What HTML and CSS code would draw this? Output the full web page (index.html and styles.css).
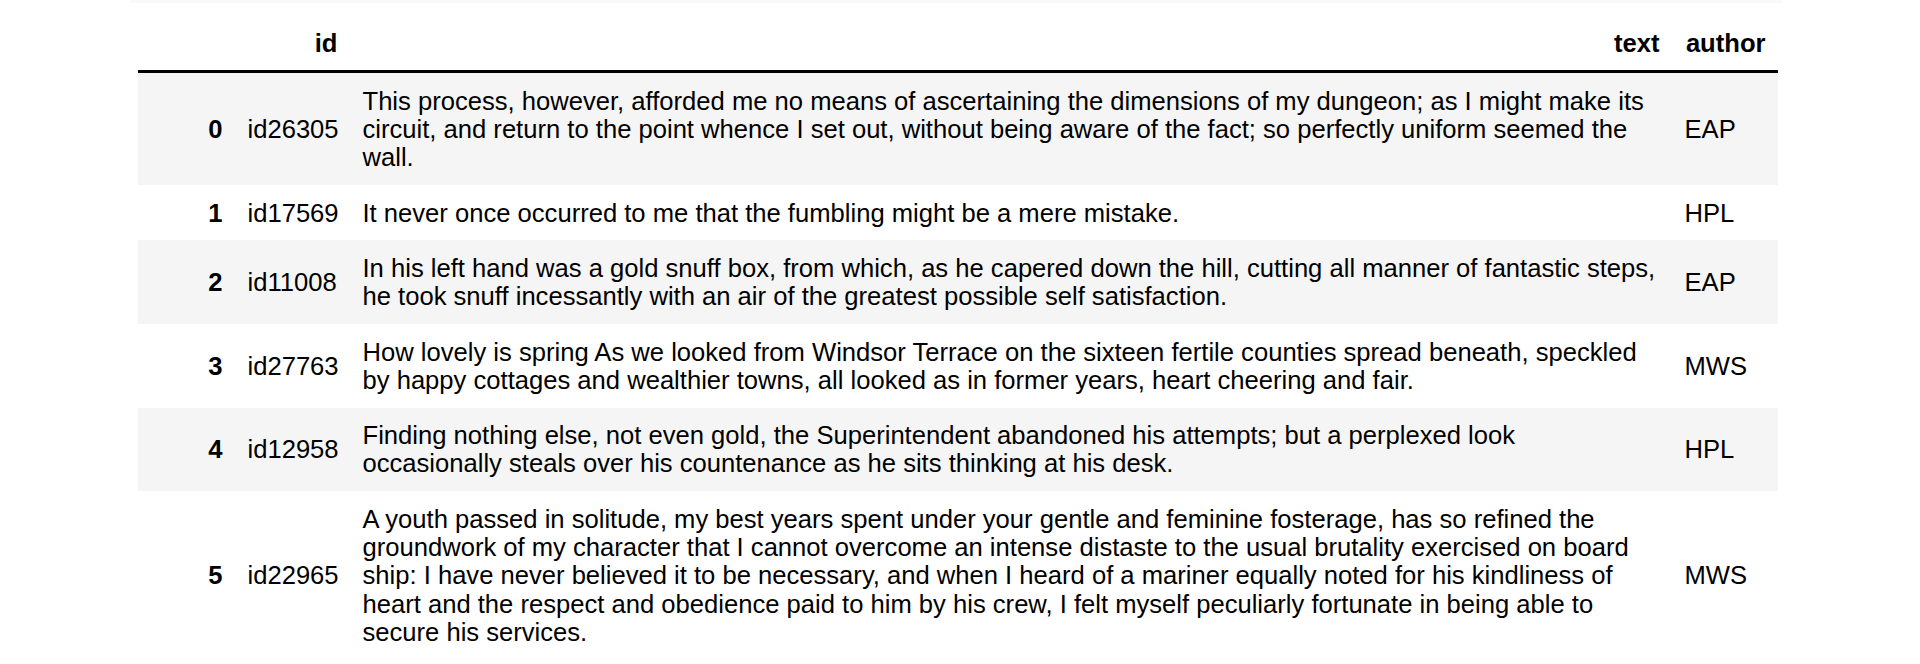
FILE: index.html
```html
<!DOCTYPE html>
<html>
<head>
<meta charset="utf-8">
<link rel="stylesheet" href="styles.css">
</head>
<body>
<div class="topband"></div>
<table class="df">
  <colgroup>
    <col class="c-idx">
    <col class="c-id">
    <col class="c-text">
    <col class="c-author">
  </colgroup>
  <thead>
    <tr><th></th><th>id</th><th>text</th><th>author</th></tr>
  </thead>
  <tbody>
    <tr><th>0</th><td>id26305</td><td>This process, however, afforded me no means of ascertaining the dimensions of my dungeon; as I might make its circuit, and return to the point whence I set out, without being aware of the fact; so perfectly uniform seemed the wall.</td><td>EAP</td></tr>
    <tr><th>1</th><td>id17569</td><td>It never once occurred to me that the fumbling might be a mere mistake.</td><td>HPL</td></tr>
    <tr><th>2</th><td>id11008</td><td>In his left hand was a gold snuff box, from which, as he capered down the hill, cutting all manner of fantastic steps, he took snuff incessantly with an air of the greatest possible self satisfaction.</td><td>EAP</td></tr>
    <tr><th>3</th><td>id27763</td><td>How lovely is spring As we looked from Windsor Terrace on the sixteen fertile counties spread beneath, speckled by happy cottages and wealthier towns, all looked as in former years, heart cheering and fair.</td><td>MWS</td></tr>
    <tr><th>4</th><td>id12958</td><td>Finding nothing else, not even gold, the Superintendent abandoned his attempts; but a perplexed look occasionally steals over his countenance as he sits thinking at his desk.</td><td>HPL</td></tr>
    <tr><th>5</th><td>id22965</td><td>A youth passed in solitude, my best years spent under your gentle and feminine fosterage, has so refined the groundwork of my character that I cannot overcome an intense distaste to the usual brutality exercised on board ship: I have never believed it to be necessary, and when I heard of a mariner equally noted for his kindliness of heart and the respect and obedience paid to him by his crew, I felt myself peculiarly fortunate in being able to secure his services.</td><td>MWS</td></tr>
  </tbody>
</table>
</body>
</html>
```
FILE: styles.css
```css
html, body {
  margin: 0;
  padding: 0;
  background: #ffffff;
}
body {
  font-family: "Liberation Sans", Arial, sans-serif;
  color: #000000;
}
.topband {
  height: 3px;
  width: 1653px;
  margin-left: 130px;
  background: #f9f9f9;
}
.df {
  margin-left: 138px;
  margin-top: 12px;
  width: 1640px;
  table-layout: fixed;
  border-collapse: collapse;
  border-spacing: 0;
  font-size: 25.6px;
  color: #000000;
}
.c-idx { width: 97px; }
.c-id { width: 115px; }
.c-text { width: 1322px; }
.c-author { width: 106px; }
.df thead {
  border-bottom: 3px solid #000000;
  vertical-align: bottom;
}
.df th, .df td {
  padding: 13.5px 12.5px;
  line-height: 28.3px;
  vertical-align: middle;
  border: none;
}
.df thead th {
  vertical-align: bottom;
  text-align: right;
  font-weight: bold;
}
.df tbody th {
  text-align: right;
  font-weight: bold;
}
.df tbody td {
  text-align: left;
  font-weight: normal;
}
.df tbody tr:nth-child(odd) {
  background: #f5f5f5;
}
```
